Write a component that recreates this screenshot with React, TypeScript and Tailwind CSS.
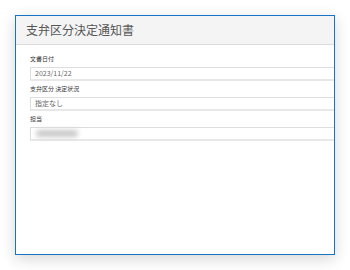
import React from "react";

const font = { fontFamily: '"Noto Sans CJK JP", "Noto Sans", sans-serif' };

function Field({ label, children }: { label: string; children: React.ReactNode }) {
  return (
    <div className="mb-[4px]">
      <div className="h-[8px] leading-[8px] text-[6px] text-[#333] mb-[4px] whitespace-nowrap">{label}</div>
      <div className="h-[14px] bg-white border border-[#dedede] border-b-2 border-b-[#e8e8e8] border-r-0 flex items-center pl-[4px] text-[7px] text-[#666] whitespace-nowrap">
        {children}
      </div>
    </div>
  );
}

export default function App() {
  return (
    <div className="w-[350px] h-[270px] bg-white overflow-hidden pt-[15px] pl-[15px]" style={font}>
      <div className="w-[320px] h-[240px] border border-[#1673c6] bg-white shadow-[0_4px_14px_rgba(0,0,0,0.16)] overflow-hidden flex flex-col">
        <div className="h-[29px] shrink-0 bg-[#f4f4f4] border-b border-[#dcdcdc] flex items-center pl-[10px] text-[12px] text-[#555]">
          支弁区分決定通知書
        </div>
        <div className="pl-[14px] pt-[10px]">
          <Field label="文書日付">2023/11/22</Field>
          <Field label="支弁区分 決定状況">指定なし</Field>
          <Field label="担当">
            <div className="w-[42px] h-[7px] bg-[#c8c8c8] rounded-full blur-[2.5px] ml-[1px]" />
          </Field>
        </div>
      </div>
    </div>
  );
}
